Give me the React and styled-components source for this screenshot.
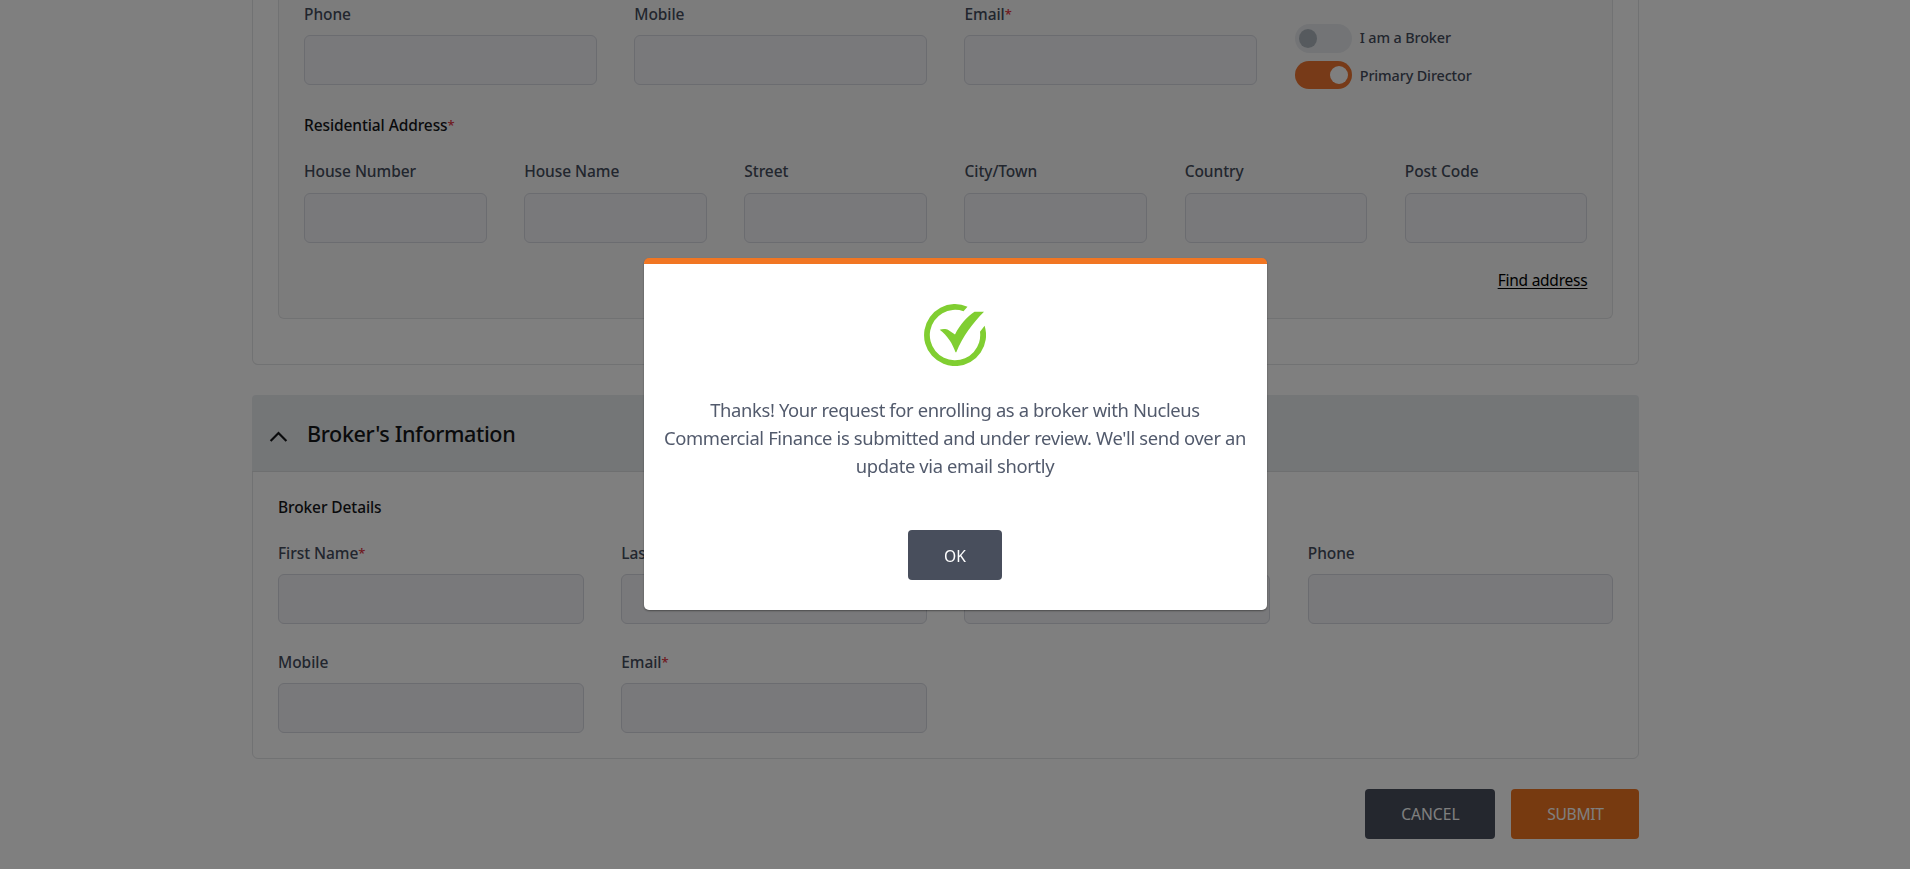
import React from "react";
import styled, { createGlobalStyle } from "styled-components";

const GlobalStyle = createGlobalStyle`
  *, *::before, *::after { box-sizing: border-box; }
  html, body { margin: 0; height: 100%; overflow: hidden; }
  body {
    background: #fff;
    font-family: "Segoe UI", "Noto Sans", "Open Sans", sans-serif;
    color: #141619;
  }
`;

const Page = styled.main`
  width: 1387.4px;
  height: 869px;
  margin-left: 252px;
  display: flex;
  flex-direction: column;
`;

const Section = styled.section`
  border: 1px solid #e3e4e6;
  border-radius: 6px;
`;

const DirectorsSection = styled(Section)`
  height: 365px;
  padding: 0 25px 45px;
  border-top: 0;
  border-top-left-radius: 0;
  border-top-right-radius: 0;
`;

const DirectorCard = styled.div`
  height: 319px;
  padding: 2px 25px 0;
  background: #f9f9f9;
  border: 1px solid #e3e4e6;
  border-top: 0;
  border-radius: 0 0 6px 6px;
`;

const FieldGrid = styled.div`
  display: grid;
  grid-template-columns: repeat(${(p) => p.$columns}, minmax(0, 1fr));
  column-gap: 37.6px;
  row-gap: 25.4px;
`;

const FieldBox = styled.label`
  display: flex;
  flex-direction: column;
  gap: 9.3px;
  font-size: 15.5px;
  font-weight: 500;
  line-height: 24px;
  letter-spacing: -0.06px;
  color: #444c5c;
`;

const Input = styled.input`
  width: 100%;
  height: 50px;
  padding: 0 12px;
  background: #f3f3f6;
  border: 1px solid #d6d8e0;
  border-radius: 6px;
  font: inherit;
  outline: none;
`;

const Star = styled.span`
  font-size: 13px;
  line-height: 1;
  vertical-align: 1px;
  color: #e0343f;
`;

const SubHeading = styled.h3`
  margin: ${(p) => p.$margin};
  font-size: 15.5px;
  font-weight: 500;
  line-height: 24px;
  letter-spacing: -0.1px;
`;

const ToggleStack = styled.div`
  display: flex;
  flex-direction: column;
  gap: 8px;
  height: 83px;
  padding-top: 22px;
`;

const ToggleRow = styled.div`
  display: flex;
  flex-shrink: 0;
  align-items: center;
  gap: 8px;
  height: 29px;
  font-size: 14.4px;
  font-weight: 500;
  letter-spacing: -0.13px;
  color: #444c5c;
`;

const ToggleText = styled.span`
  line-height: 20px;
  padding-bottom: ${(p) => (p.$raised ? 2 : 0)}px;
`;

const Switch = styled.span`
  display: flex;
  align-items: center;
  justify-content: ${(p) => (p.$on ? "flex-end" : "flex-start")};
  width: 57px;
  height: ${(p) => (p.$on ? 28 : 29)}px;
  padding: 0 4px;
  margin-bottom: ${(p) => (p.$on ? 1 : 0)}px;
  border-radius: 15px;
  background: ${(p) => (p.$on ? "#ee7430" : "#e6e9ec")};

  &::before {
    content: "";
    width: 18px;
    height: ${(p) => (p.$on ? 18 : 19)}px;
    border-radius: 50%;
    background: ${(p) => (p.$on ? "#fff" : "#adb5bd")};
  }
`;

const LinkRow = styled.div`
  display: flex;
  justify-content: flex-end;
  margin-top: 25px;
`;

const FindLink = styled.a`
  font-size: 15.5px;
  line-height: 24px;
  letter-spacing: -0.24px;
  text-decoration: underline;
  text-underline-offset: 2px;
  color: #000;
`;

const BrokerSection = styled(Section)`
  height: 364px;
  margin-top: 30px;
`;

const BrokerHeader = styled.header`
  display: flex;
  align-items: center;
  height: 77px;
  margin: -1px -1px 0;
  padding-left: 18px;
  background: #e9ecef;
  border-bottom: 1px solid #dcdee1;
  border-radius: 4px 4px 0 0;
`;

const Chevron = styled.svg`
  width: 17px;
  height: 11px;
  margin-top: 7px;
  overflow: visible;
`;

const Title = styled.h2`
  margin: 2px 0 0 20px;
  font-size: 21.6px;
  font-weight: 500;
  line-height: 30px;
  letter-spacing: -0.38px;
`;

const BrokerBody = styled.div`
  padding: 23px 25px 0;
`;

const Actions = styled.div`
  display: flex;
  justify-content: flex-end;
  gap: 16px;
  margin-top: 30px;
`;

const Button = styled.button`
  width: ${(p) => p.$width}px;
  height: 50px;
  padding: 0;
  border: 0;
  border-radius: 4px;
  background: ${(p) => (p.$primary ? "#ef7421" : "#484e5c")};
  color: #fff;
  font-family: inherit;
  font-size: 15.6px;
  letter-spacing: ${(p) => p.$tracking || 0}px;
`;

const ConfirmButton = styled(Button)`
  padding-top: 2px;
`;

const Backdrop = styled.div`
  position: fixed;
  inset: 0;
  display: flex;
  justify-content: center;
  align-items: flex-start;
  padding-top: 258px;
  background: rgba(0, 0, 0, 0.5);
`;

const Dialog = styled.div`
  display: flex;
  flex-direction: column;
  align-items: center;
  width: 623px;
  height: 352px;
  padding-top: 40px;
  background: #fff;
  border-top: 6px solid #f17623;
  border-radius: 5px;
  box-shadow: 0 1px 2px rgba(0, 0, 0, 0.4);
`;

const SuccessMark = styled.svg`
  width: 62px;
  height: 62px;
  fill: #80ce31;
`;

const Message = styled.p`
  margin: 30px 0 50px;
  width: 586px;
  text-align: center;
  font-size: 18.4px;
  font-weight: 400;
  line-height: 28px;
  letter-spacing: -0.365px;
  color: #525a6c;
`;

function Field({ label, required }) {
  return (
    <FieldBox>
      <span>
        {label}
        {required && <Star>*</Star>}
      </span>
      <Input />
    </FieldBox>
  );
}

const addressFields = ["House Number", "House Name", "Street", "City/Town", "Country", "Post Code"];

const brokerFields = [
  { label: "First Name", required: true },
  { label: "Last Name", required: true },
  { label: "Position" },
  { label: "Phone" },
  { label: "Mobile" },
  { label: "Email", required: true },
];

export default function App() {
  return (
    <>
      <GlobalStyle />
      <Page>
        <DirectorsSection>
          <DirectorCard>
            <FieldGrid $columns={4}>
              <Field label="Phone" />
              <Field label="Mobile" />
              <Field label="Email" required />
              <ToggleStack>
                <ToggleRow>
                  <Switch />
                  <ToggleText $raised>I am a Broker</ToggleText>
                </ToggleRow>
                <ToggleRow>
                  <Switch $on />
                  <ToggleText>Primary Director</ToggleText>
                </ToggleRow>
              </ToggleStack>
            </FieldGrid>
            <SubHeading $margin="28px 0 22px">
              Residential Address<Star>*</Star>
            </SubHeading>
            <FieldGrid $columns={6}>
              {addressFields.map((label) => (
                <Field key={label} label={label} />
              ))}
            </FieldGrid>
            <LinkRow>
              <FindLink>Find address</FindLink>
            </LinkRow>
          </DirectorCard>
        </DirectorsSection>

        <BrokerSection>
          <BrokerHeader>
            <Chevron viewBox="0 0 17 11">
              <path d="M0.6 10 8.5 2 16.4 10" fill="none" stroke="#141619" strokeWidth="2.2" />
            </Chevron>
            <Title>Broker's Information</Title>
          </BrokerHeader>
          <BrokerBody>
            <SubHeading $margin="0 0 22px">Broker Details</SubHeading>
            <FieldGrid $columns={4}>
              {brokerFields.map((f) => (
                <Field key={f.label} {...f} />
              ))}
            </FieldGrid>
          </BrokerBody>
        </BrokerSection>

        <Actions>
          <Button $width={130}>CANCEL</Button>
          <Button $primary $width={128} $tracking={-0.3}>
            SUBMIT
          </Button>
        </Actions>
      </Page>

      <Backdrop>
        <Dialog role="dialog">
          <SuccessMark viewBox="0 0 62 62">
            <path d="M43.5 2.7A31 31 0 1 0 60.6 21.7L56 27.7A25.2 25.2 0 1 1 39.5 7.3Z" />
            <path d="M15.7 25.7C19 24.8 22.5 25 24.3 25.9L31 30.4C36 21 43 12.5 50.5 7.8H60C48 20 39 32 32.3 48.3H31.5C28.5 39.5 23.5 31.5 15.7 25.7Z" />
          </SuccessMark>
          <Message>
            Thanks! Your request for enrolling as a broker with Nucleus Commercial Finance is
            submitted and under review. We'll send over an update via email shortly
          </Message>
          <ConfirmButton $width={94}>OK</ConfirmButton>
        </Dialog>
      </Backdrop>
    </>
  );
}
